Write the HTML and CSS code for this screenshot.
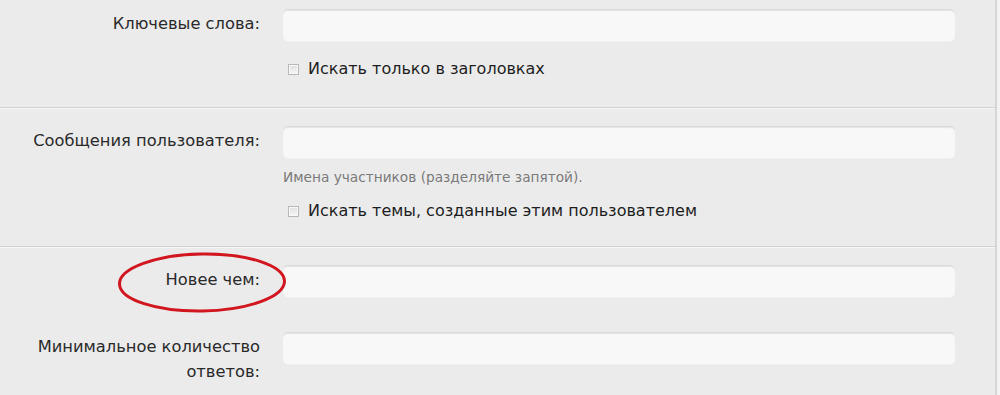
FILE: index.html
```html
<!DOCTYPE html>
<html lang="ru">
<head>
    <meta charset="UTF-8">
    <title>Поиск</title>
    <link rel="stylesheet" href="styles.css">
</head>
<body>
    <div class="page">
        <form class="search-form">
            <fieldset class="block">
                <div class="row">
                    <label class="label" for="keywords">Ключевые слова:</label>
                    <input type="text" id="keywords" class="text-input">
                </div>
                <div class="row">
                    <span></span>
                    <label class="check"><input type="checkbox"> Искать только в заголовках</label>
                </div>
            </fieldset>

            <fieldset class="block">
                <div class="row">
                    <label class="label" for="users">Сообщения пользователя:</label>
                    <div>
                        <input type="text" id="users" class="text-input">
                        <p class="hint">Имена участников (разделяйте запятой).</p>
                    </div>
                </div>
                <div class="row">
                    <span></span>
                    <label class="check check-tight"><input type="checkbox"> Искать темы, созданные этим пользователем</label>
                </div>
            </fieldset>

            <fieldset class="block last">
                <div class="row">
                    <label class="label marked" for="newer">
                        <svg class="circle" width="170" height="63" viewBox="0 0 170 63">
                            <ellipse cx="85" cy="31.5" rx="82.5" ry="28.5" fill="none" stroke="#d2161f" stroke-width="3" transform="rotate(-1 85 31.5)"/>
                        </svg>
                        Новее чем:
                    </label>
                    <input type="text" id="newer" class="text-input">
                </div>
                <div class="row row-gap">
                    <label class="label" for="replies">Минимальное количество ответов:</label>
                    <input type="text" id="replies" class="text-input">
                </div>
            </fieldset>
        </form>
    </div>
</body>
</html>
```

FILE: styles.css
```css
body {
    margin: 0;
    background: #f3f3f3;
    font-family: "DejaVu Sans", Verdana, sans-serif;
    color: #222;
}
.page {
    width: 995px;
    height: 395px;
    background: #ebebeb;
    border-right: 2px solid #d6d6d6;
    overflow: hidden;
}
.search-form {
    margin: 0;
}
.block {
    margin: 0;
    padding: 9px 0 0;
    border: 0;
    border-bottom: 1px solid #d2d2d2;
    box-shadow: 0 1px 0 #f6f6f6;
}
.block + .block {
    padding-top: 18px;
}
.block.last {
    padding-top: 18px;
    border-bottom: 0;
    box-shadow: none;
}
.row {
    display: grid;
    grid-template-columns: 260px 672px;
    column-gap: 23px;
    align-items: start;
}
.row-gap {
    margin-top: 35px;
}
.label {
    text-align: right;
    font-size: 16.3px;
    line-height: 25px;
    padding-top: 2px;
    color: #2a2a2a;
}
.text-input {
    display: block;
    box-sizing: border-box;
    width: 672px;
    height: 32px;
    margin: 0;
    border: 0;
    border-top: 1px solid #d9d9d9;
    border-radius: 5px;
    background: #f8f8f8;
    box-shadow: inset 0 1px 1px #e4e4e4, 0 1px 0 #f1f1f1;
    font: inherit;
}
.check {
    display: flex;
    align-items: center;
    gap: 9px;
    margin: 16px 0 26px;
    padding-left: 5px;
    font-size: 16px;
    line-height: 24px;
    color: #1e1e1e;
}
.check-tight {
    margin-top: 13px;
    margin-bottom: 23px;
}
.check input {
    margin: 0;
    width: 11px;
    height: 11px;
    appearance: none;
    border: 1px solid #b8b8b8;
    background: linear-gradient(#e0e0e0, #f6f6f6);
    box-shadow: inset 0 0 0 1px #f8f8f8;
}
.hint {
    margin: 10px 0 0;
    font-size: 13.7px;
    line-height: 18px;
    color: #7a7a7a;
}
.marked {
    position: relative;
}
.circle {
    position: absolute;
    left: 117px;
    top: -14px;
}
```
